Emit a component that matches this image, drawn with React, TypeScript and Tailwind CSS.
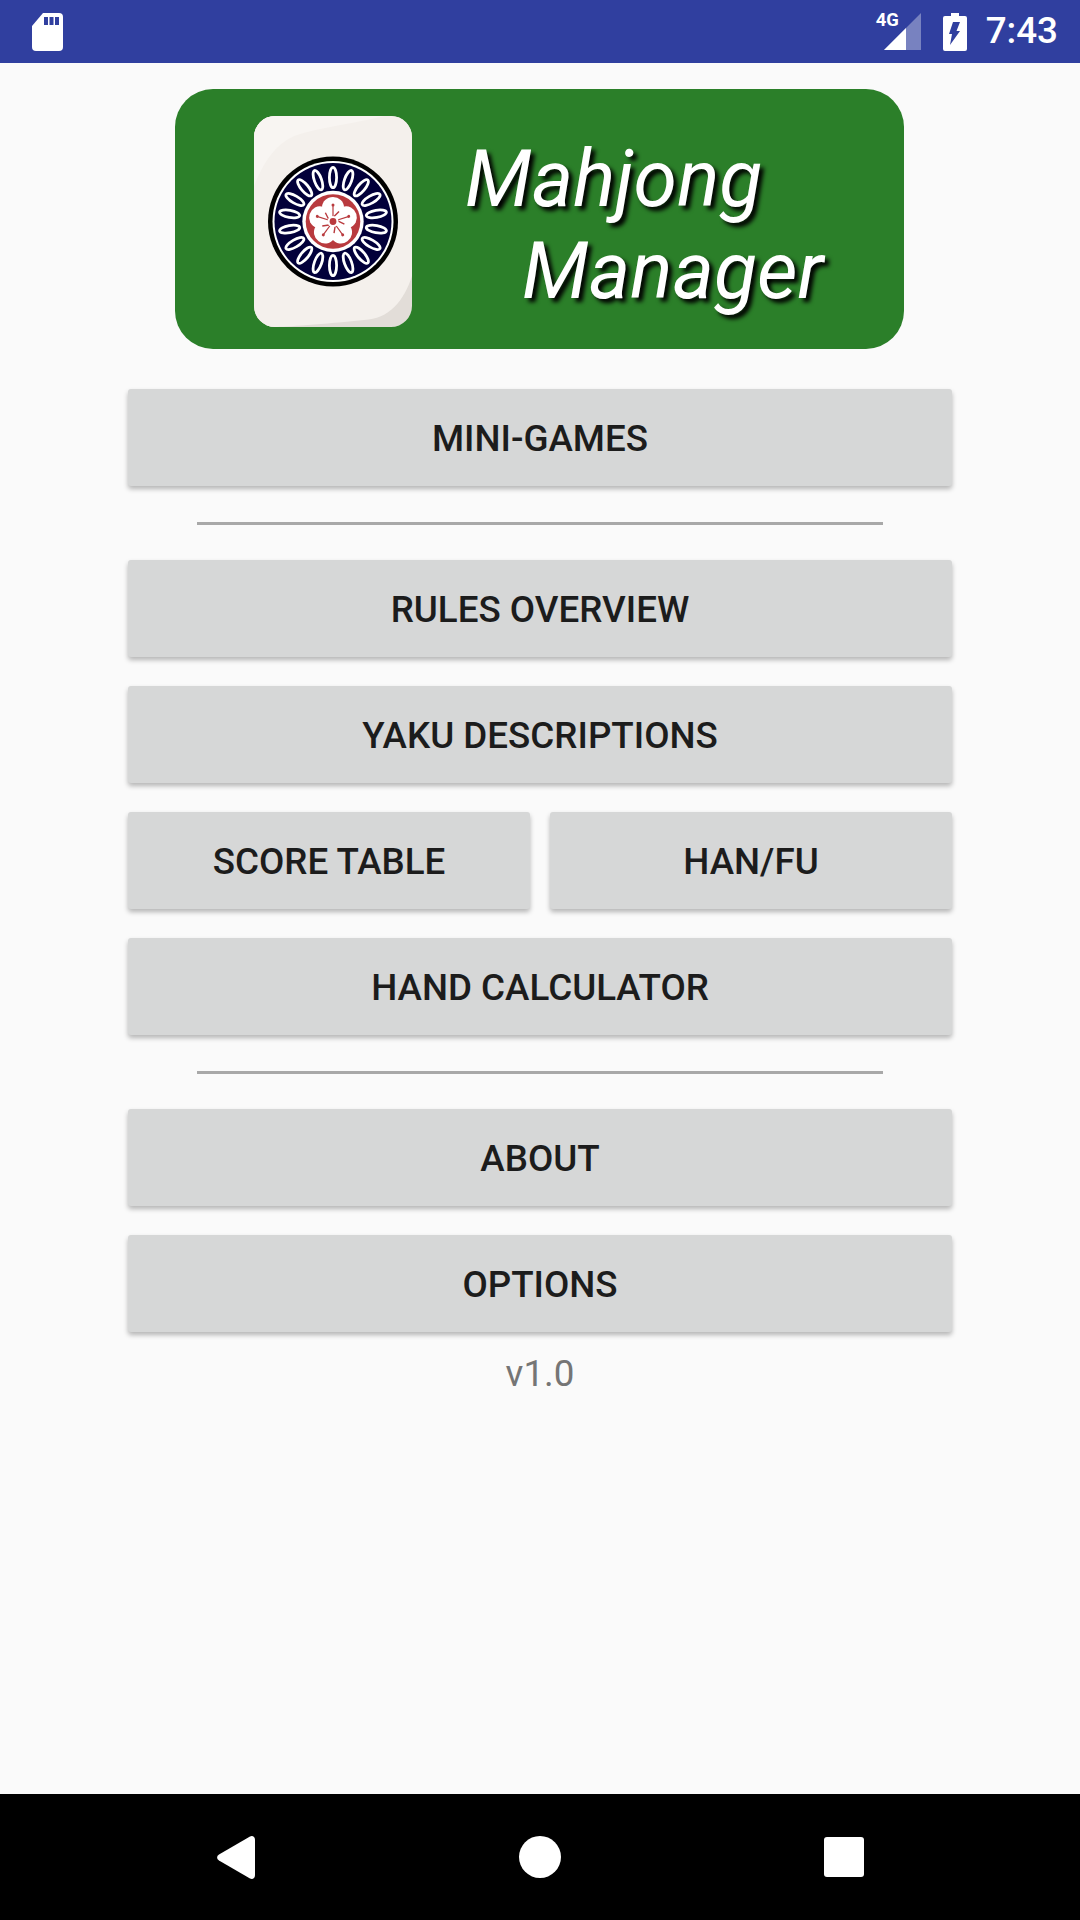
import React from "react";

const petalAngles = Array.from({ length: 18 }, (_, i) => i * 20);
const flowerAngles = [0, 72, 144, 216, 288];

const MenuButton: React.FC<{ label: string; className?: string }> = ({ label, className }) => (
  <button
    className={`h-[97px] rounded-[3px] bg-[#d6d7d7] pt-[2px] text-[36.75px] font-medium text-[#1c1c1c] shadow-[0_3px_5px_rgba(0,0,0,0.28)] ${className ?? "w-full"}`}
  >
    {label}
  </button>
);

const Divider: React.FC = () => <div className="mx-auto mb-[6px] mt-[7px] h-[3px] w-[686px] bg-[#a8a8a8]" />;

const Tile: React.FC = () => (
  <svg width="158" height="211" viewBox="0 0 158 211" className="shrink-0">
    <rect width="158" height="211" rx="21" fill="#e2ddd8" />
    <path d="M0 21A21 21 0 0 1 21 0H137A21 21 0 0 1 158 21V160C150 185 135 203 110 204 70 208 30 211 21 211A21 21 0 0 1 0 190Z" fill="#f4f0ec" />
    <path d="M0 70V21A21 21 0 0 1 21 0H130C100 8 70 10 40 20 22 28 10 45 0 70Z" fill="#f8f5f2" />
    <g transform="translate(79 105.5)">
      <circle r="65" fill="#000" />
      <circle r="60.5" fill="#fff" />
      <circle r="58.5" fill="#02003a" />
      {petalAngles.map((a) => (
        <ellipse key={a} cx="0" cy="-44" rx="3.6" ry="10.2" fill="#02003a" stroke="#fff" strokeWidth="2.8" transform={`rotate(${a})`} />
      ))}
      <circle r="30.7" fill="#fff" />
      <circle r="27.3" fill="#b93a3e" />
      {flowerAngles.map((a) => (
        <ellipse key={a} cx="0" cy="-14" rx="11" ry="10.5" fill="#fff" transform={`rotate(${a})`} />
      ))}
      {flowerAngles.map((a) => (
        <g key={a} transform={`rotate(${a})`} stroke="#b93a3e" fill="none">
          <line x1="0" y1="-4" x2="0" y2="-16" strokeWidth="1.2" />
          <circle cx="0" cy="-16.5" r="1.5" fill="#b93a3e" stroke="none" />
          <line x1="0" y1="-4" x2="6" y2="-10" strokeWidth="1.4" />
        </g>
      ))}
      <circle r="5.5" fill="#fff" />
      <circle r="3.4" fill="#b93a3e" />
    </g>
  </svg>
);

export default function App() {
  return (
    <div className="flex h-[1920px] w-[1080px] flex-col bg-[#fafafa] font-['Roboto',sans-serif]">
      {/* status bar */}
      <div className="flex h-[63px] items-center bg-[#303f9f] pl-[32px] pr-[22px] text-white">
        <svg width="31" height="38" viewBox="0 0 31 38">
          <path d="M11 0H27A4 4 0 0 1 31 4V34A4 4 0 0 1 27 38H4A4 4 0 0 1 0 34V13Z" fill="#fff" />
          <rect x="12" y="4" width="4" height="8" fill="#303f9f" />
          <rect x="17.5" y="4" width="4" height="8" fill="#303f9f" />
          <rect x="23" y="4" width="4" height="8" fill="#303f9f" />
        </svg>
        <div className="flex-1" />
        <div className="relative h-[37px] w-[46px]">
          <span className="absolute left-[1px] top-[-7px] text-[18.4px] font-bold leading-[28px]">4G</span>
          <svg width="37" height="37" viewBox="0 0 37 37" className="absolute left-[9px] top-0">
            <path d="M37 0V37H0Z" fill="#fff" fillOpacity="0.35" />
            <path d="M22 15V37H0Z" fill="#fff" />
          </svg>
        </div>
        <svg width="24" height="38" viewBox="0 0 24 38" className="ml-[22px]">
          <path d="M8 0H16V3H22A2 2 0 0 1 24 5V36A2 2 0 0 1 22 38H2A2 2 0 0 1 0 36V5A2 2 0 0 1 2 3H8Z" fill="#fff" />
          <path d="M10 9H17L13.5 18H17L7 32L9 21H6Z" fill="#303f9f" />
        </svg>
        <span className="ml-[19px] text-[36.75px] font-medium leading-none">7:43</span>
      </div>

      {/* content */}
      <div className="flex flex-1 flex-col items-center">
        <div className="mr-[1px] mt-[26px] flex h-[260px] w-[729px] items-start rounded-[38px] bg-[#2b7f29] pl-[79px] pt-[27px]">
          <Tile />
          <div className="ml-[53px] mt-[17px] text-[78.75px] italic leading-[92px] text-white [text-shadow:4px_4px_4px_#000]">
            <div>Mahjong</div>
            <div className="pl-[57px]">Manager</div>
          </div>
        </div>

        <div className="mt-[40px] flex w-[824px] flex-col gap-[29px]">
          <MenuButton label="MINI-GAMES" />
          <Divider />
          <MenuButton label="RULES OVERVIEW" />
          <MenuButton label="YAKU DESCRIPTIONS" />
          <div className="flex gap-[20px]">
            <MenuButton label="SCORE TABLE" className="flex-1" />
            <MenuButton label="HAN/FU" className="flex-1" />
          </div>
          <MenuButton label="HAND CALCULATOR" />
          <Divider />
          <MenuButton label="ABOUT" />
          <MenuButton label="OPTIONS" />
        </div>
        <div className="mt-[20px] text-[36.75px] leading-[43px] text-[#757575]">v1.0</div>
      </div>

      {/* nav bar */}
      <div className="flex h-[126px] items-center justify-between bg-black pl-[217px] pr-[216px]">
        <svg width="38" height="43" viewBox="0 0 38 43">
          <path d="M33 0.5C36 -1 38 1 38 4V39C38 42 36 44 33 42.5L2 24.5C-0.5 23 -0.5 20 2 18.5Z" fill="#fff" />
        </svg>
        <div className="h-[42px] w-[42px] rounded-full bg-white" />
        <div className="h-[40px] w-[40px] rounded-[3px] bg-white" />
      </div>
    </div>
  );
}
